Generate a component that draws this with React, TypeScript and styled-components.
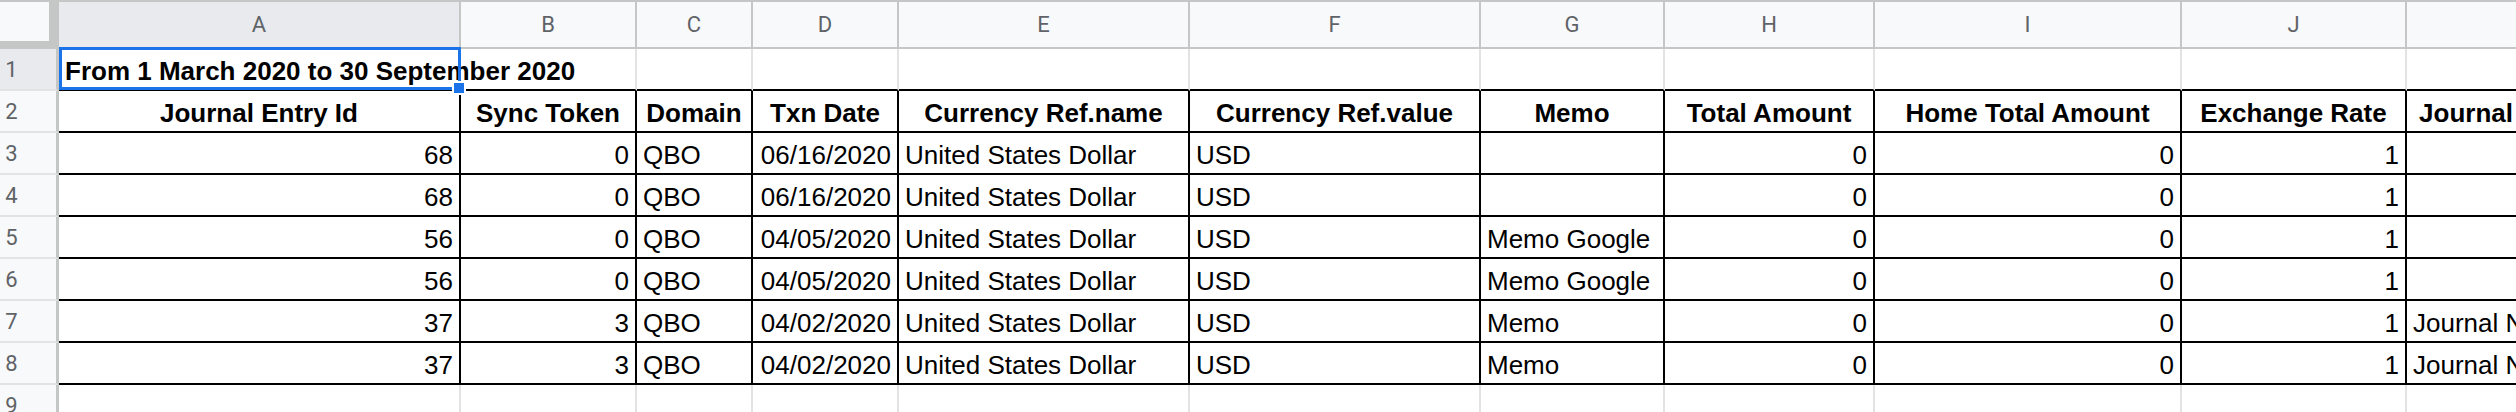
import styled, { createGlobalStyle } from 'styled-components';

const GlobalStyle = createGlobalStyle`
  html, body {
    margin: 0;
    padding: 0;
    background: #ffffff;
    overflow: hidden;
  }
`;

type Align = 'left' | 'right' | 'center';

interface Column {
  letter: string;
  width: number;
  align: Align;
}

const columns: Column[] = [
  { letter: 'A', width: 402, align: 'right' },
  { letter: 'B', width: 176, align: 'right' },
  { letter: 'C', width: 116, align: 'left' },
  { letter: 'D', width: 146, align: 'right' },
  { letter: 'E', width: 291, align: 'left' },
  { letter: 'F', width: 291, align: 'left' },
  { letter: 'G', width: 184, align: 'left' },
  { letter: 'H', width: 210, align: 'right' },
  { letter: 'I', width: 307, align: 'right' },
  { letter: 'J', width: 225, align: 'right' },
  { letter: 'K', width: 331, align: 'left' },
];

const headers = [
  'Journal Entry Id',
  'Sync Token',
  'Domain',
  'Txn Date',
  'Currency Ref.name',
  'Currency Ref.value',
  'Memo',
  'Total Amount',
  'Home Total Amount',
  'Exchange Rate',
  'Journal Line Description',
];

const rows: string[][] = [
  ['68', '0', 'QBO', '06/16/2020', 'United States Dollar', 'USD', '', '0', '0', '1', ''],
  ['68', '0', 'QBO', '06/16/2020', 'United States Dollar', 'USD', '', '0', '0', '1', ''],
  ['56', '0', 'QBO', '04/05/2020', 'United States Dollar', 'USD', 'Memo Google', '0', '0', '1', ''],
  ['56', '0', 'QBO', '04/05/2020', 'United States Dollar', 'USD', 'Memo Google', '0', '0', '1', ''],
  ['37', '3', 'QBO', '04/02/2020', 'United States Dollar', 'USD', 'Memo', '0', '0', '1', 'Journal Note'],
  ['37', '3', 'QBO', '04/02/2020', 'United States Dollar', 'USD', 'Memo', '0', '0', '1', 'Journal Note'],
];

const HEADER_LINE = '#c4c7c5';
const GRID_LINE = '#e2e3e3';
const INK = '#000000';

const Sheet = styled.div<{ $cols: string }>`
  display: grid;
  grid-template-columns: ${(p) => p.$cols};
  grid-template-rows: 49px repeat(9, 42px);
  width: max-content;
`;

const Corner = styled.div`
  box-sizing: border-box;
  background: #f8f9fa;
  border-top: 2px solid ${HEADER_LINE};
  border-right: 10px solid ${HEADER_LINE};
  border-bottom: 8px solid ${HEADER_LINE};
`;

const ColHead = styled.div<{ $selected?: boolean }>`
  box-sizing: border-box;
  display: flex;
  align-items: center;
  justify-content: center;
  background: ${(p) => (p.$selected ? '#e8eaed' : '#f8f9fa')};
  border-top: 2px solid ${HEADER_LINE};
  border-right: 2px solid ${HEADER_LINE};
  border-bottom: 2px solid ${HEADER_LINE};
  font-family: Roboto, 'Liberation Sans', sans-serif;
  font-size: 22px;
  color: #5f6368;
`;

const RowHead = styled.div<{ $selected?: boolean }>`
  box-sizing: border-box;
  display: flex;
  align-items: center;
  justify-content: center;
  padding-right: 33px;
  background: ${(p) => (p.$selected ? '#e8eaed' : '#f8f9fa')};
  border-right: 3px solid ${HEADER_LINE};
  border-bottom: 2px solid ${GRID_LINE};
  font-family: Roboto, 'Liberation Sans', sans-serif;
  font-size: 22px;
  color: #5f6368;
`;

const Cell = styled.div<{
  $align: Align;
  $bold?: boolean;
  $right: string;
  $bottom: string;
}>`
  position: relative;
  box-sizing: border-box;
  display: flex;
  align-items: flex-end;
  justify-content: ${(p) =>
    p.$align === 'right' ? 'flex-end' : p.$align === 'center' ? 'center' : 'flex-start'};
  padding: 0 6px 4px;
  border-right: 2px solid ${(p) => p.$right};
  border-bottom: 2px solid ${(p) => p.$bottom};
  font-family: 'Liberation Sans', Arial, sans-serif;
  font-size: 26px;
  line-height: 28px;
  font-weight: ${(p) => (p.$bold ? 700 : 400)};
  color: ${INK};
  white-space: nowrap;
`;

const Selection = styled.div`
  position: absolute;
  left: 0;
  top: -2px;
  right: -2px;
  bottom: -1px;
  border: 3px solid #1a73e8;
  pointer-events: none;
  z-index: 2;
`;

const FillHandle = styled.div`
  position: absolute;
  right: -8px;
  bottom: -8px;
  width: 10px;
  height: 10px;
  background: #1a73e8;
  border: 2px solid #ffffff;
  z-index: 3;
`;

export default function App() {
  const cols = ['59px', ...columns.map((c) => `${c.width}px`)].join(' ');

  return (
    <>
      <GlobalStyle />
      <Sheet $cols={cols}>
        <Corner />
        {columns.map((c) => (
          <ColHead key={c.letter} $selected={c.letter === 'A'}>
            {c.letter !== 'K' ? c.letter : ''}
          </ColHead>
        ))}

        {/* row 1: report period title */}
        <RowHead $selected>1</RowHead>
        {columns.map((c, i) => (
          <Cell key={c.letter} $align="left" $bold $right={i === 0 ? INK : GRID_LINE} $bottom={INK}>
            {i === 0 && (
              <>
                From 1 March 2020 to 30 September 2020
                <Selection>
                  <FillHandle />
                </Selection>
              </>
            )}
          </Cell>
        ))}

        {/* row 2: column titles */}
        <RowHead>2</RowHead>
        {headers.map((h) => (
          <Cell key={h} $align="center" $bold $right={INK} $bottom={INK}>
            {h}
          </Cell>
        ))}

        {rows.map((r, ri) => (
          <>
            <RowHead key={`h${ri}`}>{ri + 3}</RowHead>
            {r.map((v, ci) => (
              <Cell key={`${ri}-${ci}`} $align={columns[ci].align} $right={INK} $bottom={INK}>
                {v}
              </Cell>
            ))}
          </>
        ))}

        <RowHead>9</RowHead>
        {columns.map((c) => (
          <Cell key={`e${c.letter}`} $align="left" $right={GRID_LINE} $bottom={GRID_LINE} />
        ))}
      </Sheet>
    </>
  );
}
